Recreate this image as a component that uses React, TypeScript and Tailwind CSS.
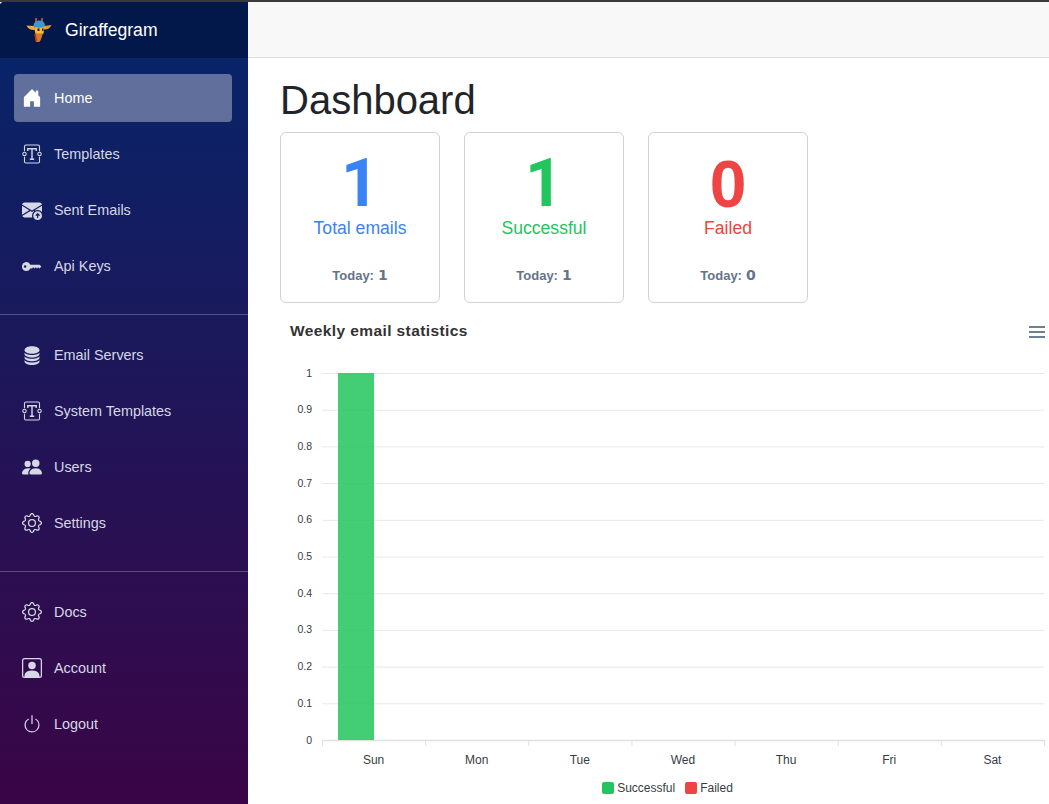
import React from "react";
import {
  BsHouseDoorFill,
  BsEnvelopeArrowUpFill,
  BsKeyFill,
  BsDatabaseFill,
  BsPeopleFill,
  BsGear,
  BsPersonSquare,
  BsPower,
} from "react-icons/bs";

function TemplateIcon() {
  return (
    <svg width="20" height="20" viewBox="0 0 20 20" fill="none" stroke="currentColor" strokeWidth="1.1">
      <path d="M2.500 7.200V2.500a1.500 1.500 0 0 1 1.500-1.500h12a1.500 1.500 0 0 1 1.500 1.500v4.700M2.500 12.800v4.700a1.500 1.500 0 0 0 1.500 1.500h12a1.500 1.500 0 0 0 1.500-1.500v-4.700" />
      <circle cx="2.500" cy="10" r="1.700" />
      <circle cx="17.500" cy="10" r="1.700" />
      <path d="M5.800 7V4.800h8.400V7M10 4.800v10.400M7.800 15.200h4.400" strokeWidth="1.400" />
    </svg>
  );
}

function GiraffeLogo() {
  return (
    <svg width="26" height="24" viewBox="0 0 26 24">
      <path d="M10 0.500v5M16 0.500v5" stroke="#c2702e" strokeWidth="1.600" />
      <circle cx="10" cy="1" r="1.200" fill="#a8501f" />
      <circle cx="16" cy="1" r="1.200" fill="#a8501f" />
      <path d="M0.500 7.500l8 .5 .5 4c-3.500 .5-7-1-8.500-4.500z" fill="#f0a93a" />
      <path d="M25.500 7l-7.500 1-.5 3.500c3.500 .3 6.500-1 8-4.500z" fill="#e89a30" />
      <path d="M8.500 8.500h10l-1 7-2.500 2H11l-2-3z" fill="#f7bf2e" />
      <path d="M7.500 7c.5-3 3-4.500 6-4.500s5 1.500 5.500 4.500c-.2 1.500-1 2-1.500 2.200-3 .8-7 .8-9.500-.2z" fill="#3f97cf" />
      <path d="M9 14l2 1.500h4.500l1-1-.5 4-1 2.500c-.3 1.500-1 2.500-2 3H10l-1-4z" fill="#d9772a" />
      <rect x="11.500" y="10.500" width="2" height="2.400" fill="#2a1a0a" />
      <rect x="16" y="10.500" width="1.600" height="2.400" fill="#2a1a0a" />
      <path d="M9 16l1.500 7.500" stroke="#a8401c" strokeWidth="1.500" />
    </svg>
  );
}

const groups = [
  [
    { label: "Home", icon: <BsHouseDoorFill size={20} />, active: true },
    { label: "Templates", icon: <TemplateIcon /> },
    { label: "Sent Emails", icon: <BsEnvelopeArrowUpFill size={20} /> },
    { label: "Api Keys", icon: <BsKeyFill size={21} /> },
  ],
  [
    { label: "Email Servers", icon: <BsDatabaseFill size={22} /> },
    { label: "System Templates", icon: <TemplateIcon /> },
    { label: "Users", icon: <BsPeopleFill size={20} /> },
    { label: "Settings", icon: <BsGear size={20} /> },
  ],
  [
    { label: "Docs", icon: <BsGear size={20} /> },
    { label: "Account", icon: <BsPersonSquare size={20} /> },
    { label: "Logout", icon: <BsPower size={20} /> },
  ],
];

const cards = [
  { value: "1", label: "Total emails", today: "1", num: "text-[#3b82f6] font-['Roboto',sans-serif]", lab: "text-[#3b82f6]" },
  { value: "1", label: "Successful", today: "1", num: "text-[#22c55e] font-['Roboto',sans-serif]", lab: "text-[#22c55e]" },
  { value: "0", label: "Failed", today: "0", num: "text-[#ef4444]", lab: "text-[#ef4444]" },
];

const yLabels = ["1", "0.9", "0.8", "0.7", "0.6", "0.5", "0.4", "0.3", "0.2", "0.1", "0"];
const days = ["Sun", "Mon", "Tue", "Wed", "Thu", "Fri", "Sat"];

function Chart() {
  const ox = 42;
  const top = 9;
  const stepY = 36.7;
  const stepX = 103.14;
  const bottom = top + stepY * 10;
  return (
    <svg width="769" height="410" viewBox="0 0 769 410" className="block" style={{ fontFamily: '"Liberation Sans", Arial, sans-serif' }}>
      {yLabels.map((l, i) => {
        const y = top + i * stepY;
        return (
          <g key={l}>
            <line x1={ox} x2={764} y1={y + 0.5} y2={y + 0.5} stroke={i === 10 ? "#e0e0e0" : "#e8e8e8"} strokeWidth={i === 10 ? 1.5 : 1} />
            <text x={32} y={y + 3.5} textAnchor="end" fontSize="10.5" fill="#373d3f">{l}</text>
          </g>
        );
      })}
      <rect x={58} y={top} width={36} height={stepY * 10} fill="#22c55e" fillOpacity="0.85" />
      {days.map((d, i) => (
        <text key={d} x={ox + stepX * i + stepX / 2} y={bottom + 24} textAnchor="middle" fontSize="12" fill="#373d3f">{d}</text>
      ))}
      {Array.from({ length: 8 }).map((_, i) => (
        <line key={i} x1={ox + stepX * i + 0.5} x2={ox + stepX * i + 0.5} y1={bottom} y2={bottom + 6} stroke="#e0e0e0" />
      ))}
    </svg>
  );
}

export default function App() {
  return (
    <div className="flex h-[804px] w-[1049px] flex-col overflow-hidden bg-white font-['Liberation_Sans',Arial,sans-serif]">
      <div className="h-[2px] shrink-0 bg-[#3a3a3a]" />
      <div className="flex min-h-0 flex-1">
        <aside className="flex w-[248px] shrink-0 flex-col rounded-tl-[4px] bg-linear-to-b/srgb from-[#05266b] to-[#3a0546] text-[#d6d8e6]">
          <div className="flex h-[56px] shrink-0 items-center rounded-tl-[4px] bg-[#03184a] pl-[26px] text-white">
            <GiraffeLogo />
            <span className="ml-[13px] text-[17.6px]">Giraffegram</span>
          </div>
          <nav className="flex flex-col pt-4">
            {groups.map((group, gi) => (
              <div key={gi}>
                {gi > 0 && <div className="mb-[16px] mt-[24px] h-px bg-white/25" />}
                <ul className="flex flex-col gap-2">
                  {group.map((item) => (
                    <li key={item.label}>
                      <a
                        className={
                          item.active
                            ? "ml-[14px] mr-[16px] flex h-12 items-center gap-[12px] rounded-[4px] bg-white/35 pl-[8px] text-[14.4px] text-white"
                            : "ml-[14px] mr-[16px] flex h-12 items-center gap-[12px] rounded-[4px] pl-[8px] text-[14.4px]"
                        }
                      >
                        <span className="flex w-[20px] justify-center">{item.icon}</span>
                        <span className="pt-[2px]">{item.label}</span>
                      </a>
                    </li>
                  ))}
                </ul>
              </div>
            ))}
          </nav>
        </aside>
        <main className="flex min-w-0 flex-1 flex-col">
          <div className="h-[56px] shrink-0 border-b border-[#dddddd] bg-[#f8f8f8]" />
          <div className="px-[32px]">
            <h1 className="mt-[18px] text-[40px] leading-[48px] text-[#212529]">Dashboard</h1>
            <div className="mt-[8px] flex gap-6">
              {cards.map((c) => (
                <div key={c.label} className="flex h-[171px] w-[160px] flex-col items-center rounded-[6px] border border-[#cfd2d6] bg-white">
                  <div className={`mt-[19px] text-[66px] font-bold leading-[64px] ${c.num}`}>{c.value}</div>
                  <div className={`text-[17.6px] leading-[24px] ${c.lab}`}>{c.label}</div>
                  <div className="mt-[25px] flex items-baseline gap-[4px] text-[13px] font-bold text-[#64748b]">
                    <span>Today:</span>
                    <span className="font-['DejaVu_Sans',sans-serif] text-[14px]">{c.today}</span>
                  </div>
                </div>
              ))}
            </div>
            <div className="relative mt-[19px] w-[769px]">
              <div className="pl-[10px] text-[15.5px] font-bold leading-[18px] tracking-[0.4px] text-[#333333]">Weekly email statistics</div>
              <svg className="absolute right-[3px] top-[3px]" width="18" height="14" viewBox="0 0 18 14" stroke="#6e8192" strokeWidth="2">
                <path d="M1 2h16M1 7h16M1 12h16" />
              </svg>
              <div className="mt-[24px]">
                <Chart />
              </div>
              <div className="mt-[7px] flex items-center justify-center pl-[6px] text-[12px] leading-[14px] text-[#373d3f]">
                <span className="mr-[3px] h-[12px] w-[12px] rounded-[2px] bg-[#22c55e]" />
                <span className="mr-[10px]">Successful</span>
                <span className="mr-[3px] h-[12px] w-[12px] rounded-[2px] bg-[#ef4444]" />
                <span>Failed</span>
              </div>
            </div>
          </div>
        </main>
      </div>
    </div>
  );
}
